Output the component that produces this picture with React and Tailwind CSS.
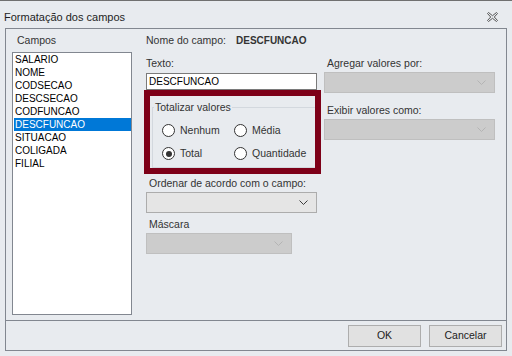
import React from 'react';

const campos = ['SALARIO', 'NOME', 'CODSECAO', 'DESCSECAO', 'CODFUNCAO', 'DESCFUNCAO', 'SITUACAO', 'COLIGADA', 'FILIAL'];

const Chevron = ({ color }) => (
  <svg width="9" height="5" viewBox="0 0 9 5" fill="none">
    <path d="M0.5 0.5 L4.5 4.5 L8.5 0.5" stroke={color} strokeWidth="1" />
  </svg>
);

const Select = ({ width, enabled }) => (
  <div
    className={`mt-[2px] h-[21px] flex items-center justify-end pr-[8px] border ${
      enabled ? 'bg-[#e5e5e5] border-[#acacac]' : 'bg-[#cccccc] border-[#bfbfbf]'
    } ${width}`}
  >
    <Chevron color={enabled ? '#3c3c3c' : '#b4b4b4'} />
  </div>
);

const Radio = ({ label, checked }) => (
  <div className="flex items-center h-[13px]">
    <div className="w-[13px] h-[13px] rounded-full border border-[#333] bg-white flex items-center justify-center">
      {checked && <div className="w-[6px] h-[6px] rounded-full bg-[#333]" />}
    </div>
    <span className="ml-[5px] leading-[13px]">{label}</span>
  </div>
);

const App = () => {
  return (
    <div
      className="w-[512px] h-[356px] bg-[#e8ebef] border-t border-[#707070] text-[#333] text-[10.5px] overflow-hidden"
      style={{ fontFamily: '"Liberation Sans", Arial, sans-serif' }}
    >
      {/* title bar */}
      <div className="h-[27px] flex items-center justify-between pl-[4px] pr-[14px] pt-[5px]">
        <span className="text-[11px] leading-[13px] text-[#1e1e1e]">Formatação dos campos</span>
        <svg width="11" height="10" viewBox="0 0 11 10" fill="none">
          <path
            d="M0.5 1.5 L1.5 0.5 L5.5 3.7 L9.5 0.5 L10.5 1.5 L7.3 5 L10.5 8.5 L9.5 9.5 L5.5 6.3 L1.5 9.5 L0.5 8.5 L3.7 5 Z"
            stroke="#555"
            strokeWidth="1"
          />
        </svg>
      </div>

      {/* main panel */}
      <div className="mx-[5px] h-[323px] border border-[#828790] flex flex-col">
        <div className="h-[291px] flex">
          {/* campos list */}
          <div className="pl-[6px] pt-[5px] flex flex-col">
            <div className="h-[13px] leading-[13px] pl-[5px]">Campos</div>
            <div className="mt-[5px] w-[120px] h-[263px] bg-white border border-[#828790] text-[10px] text-black">
              {campos.map((c) => (
                <div
                  key={c}
                  className={`h-[13px] leading-[13px] ml-[1px] pl-[1px] ${
                    c === 'DESCFUNCAO' ? 'bg-[#0078d7] text-white' : ''
                  }`}
                >
                  {c}
                </div>
              ))}
            </div>
          </div>

          {/* details */}
          <div className="ml-[14px] pt-[5px] flex flex-col">
            <div className="h-[13px] flex items-center">
              <span className="w-[90px] leading-[13px]">Nome do campo:</span>
              <span className="font-bold text-[10px] leading-[13px] text-[#333]">DESCFUNCAO</span>
            </div>

            <div className="flex">
              <div className="w-[171px] flex flex-col">
                <div className="mt-[10px] h-[13px] leading-[13px]">Texto:</div>
                <div className="mt-[3px] h-[17px] bg-white border border-[#7a7a7a] flex items-center pl-[2px] text-[10px] text-black">
                  DESCFUNCAO
                </div>

                {/* highlighted group */}
                <div className="-ml-[2px] -mr-[4px] h-[84px] border-[6px] border-[#7d0018] overflow-hidden">
                  <div className="ml-[2px] mr-[-2px] mt-[11px] h-[61px] border-l border-t border-b border-[#d3d8de]">
                    <div className="-mt-[7px] ml-[1px] flex">
                      <span className="bg-[#e8ebef] px-[1px] leading-[13px]">Totalizar valores</span>
                    </div>
                    <div className="pl-[9px] mt-[10px] grid grid-cols-[72px_auto] gap-y-[10px]">
                      <Radio label="Nenhum" />
                      <Radio label="Média" />
                      <Radio label="Total" checked />
                      <Radio label="Quantidade" />
                    </div>
                  </div>
                </div>

                <div className="mt-[3px] ml-[3px] h-[13px] leading-[13px]">Ordenar de acordo com o campo:</div>
                <Select width="w-[171px]" enabled />
                <div className="mt-[5px] ml-[3px] h-[13px] leading-[13px]">Máscara</div>
                <Select width="w-[146px]" />
              </div>

              <div className="ml-[7px] w-[171px] flex flex-col">
                <div className="mt-[10px] ml-[3px] h-[13px] leading-[13px]">Agregar valores por:</div>
                <Select width="w-[171px]" />
                <div className="mt-[11px] ml-[3px] h-[13px] leading-[13px]">Exibir valores como:</div>
                <Select width="w-[171px]" />
              </div>
            </div>
          </div>
        </div>

        {/* buttons */}
        <div className="flex-1 border-t border-[#828790] flex justify-end items-start pt-[4px] pr-[4px] gap-[8px]">
          <button className="w-[73px] h-[22px] bg-[#e1e1e1] border border-[#adadad] text-[10.5px] text-[#222]">OK</button>
          <button className="w-[73px] h-[22px] bg-[#e1e1e1] border border-[#adadad] text-[10.5px] text-[#222]">Cancelar</button>
        </div>
      </div>
    </div>
  );
};

export default App;
